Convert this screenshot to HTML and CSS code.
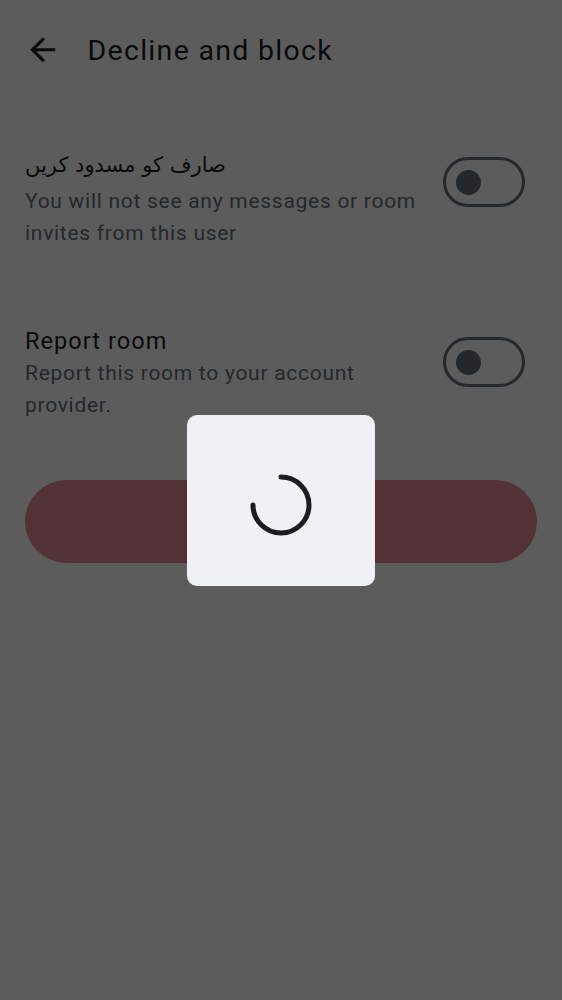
FILE: index.html
```html
<!DOCTYPE html>
<html lang="en">
<head>
<meta charset="utf-8">
<title>Decline and block</title>
<link rel="stylesheet" href="styles.css">
</head>
<body>
<div class="page">
  <header class="topbar">
    <button class="back" aria-label="Back">
      <svg viewBox="0 0 24 24" width="37.5" height="37.5"><path d="M20 11H7.83l5.59-5.59L12 4l-8 8 8 8 1.41-1.41L7.83 13H20v-2z" fill="currentColor"/></svg>
    </button>
    <h1 class="title">Decline and block</h1>
  </header>
  <main class="content">
    <div class="row row-first">
      <div class="texts">
        <div class="row-title urdu">صارف کو مسدود کریں</div>
        <div class="row-sub">You will not see any messages or room invites from this user</div>
      </div>
      <div class="switch"><span class="knob"></span></div>
    </div>
    <div class="row">
      <div class="texts">
        <div class="row-title">Report room</div>
        <div class="row-sub">Report this room to your account provider.</div>
      </div>
      <div class="switch"><span class="knob"></span></div>
    </div>
    <div class="action"></div>
  </main>
</div>
<div class="scrim">
  <div class="dialog">
    <svg class="spinner" viewBox="0 0 62 62" width="62" height="62"><path d="M31 3 A28 28 0 1 1 3 31" fill="none" stroke="#1b1d22" stroke-width="5" stroke-linecap="round"/></svg>
  </div>
</div>
</body>
</html>
```
FILE: styles.css
```css
html, body {
  margin: 0;
  padding: 0;
  background: #ffffff;
}
body {
  font-family: Roboto, "DejaVu Sans", sans-serif;
  color: #1b1d22;
  width: 562px;
  height: 1000px;
  overflow: hidden;
}
.page {
  display: flex;
  flex-direction: column;
}
.topbar {
  height: 100px;
  display: flex;
  align-items: center;
  padding-left: 24px;
  gap: 26px;
}
.back {
  border: 0;
  background: none;
  padding: 0;
  width: 37.5px;
  height: 37.5px;
  color: #1b1d22;
  display: flex;
}
.title {
  margin: 0;
  font-size: 28.5px;
  font-weight: 400;
  letter-spacing: 1.3px;
}
.content {
  padding: 45px 25px 0 25px;
  display: flex;
  flex-direction: column;
}
.row {
  display: flex;
  align-items: flex-start;
  gap: 16px;
  padding-right: 12px;
}
.row-first {
  margin-bottom: 76px;
}
.texts {
  flex: 1;
  display: flex;
  flex-direction: column;
}
.row-title {
  font-size: 23.5px;
  line-height: 32px;
  letter-spacing: 1.05px;
  color: #1b1d22;
}
.urdu {
  font-family: "DejaVu Sans", "Noto Sans", sans-serif;
  font-size: 21px;
  line-height: 40px;
  letter-spacing: 0;
  text-align: left;
}
.row-sub {
  font-size: 21px;
  line-height: 32px;
  letter-spacing: 0.72px;
  color: #656d77;
}
.switch {
  flex: none;
  box-sizing: border-box;
  width: 82px;
  height: 50px;
  margin-top: 12px;
  border: 3px solid #656d77;
  border-radius: 25px;
  display: flex;
  align-items: center;
  padding-left: 10px;
}
.knob {
  width: 25px;
  height: 25px;
  border-radius: 50%;
  background: #656d77;
}
.action {
  margin-top: 59px;
  height: 83px;
  border-radius: 42px;
  background: #e28c96;
}
.scrim {
  position: fixed;
  inset: 0;
  background: rgba(0, 0, 0, 0.64);
  display: flex;
  align-items: center;
  justify-content: center;
}
.dialog {
  background: #f0f1f5;
  border-radius: 10px;
  padding: 59px 63px 50px 63px;
  display: flex;
}
```
